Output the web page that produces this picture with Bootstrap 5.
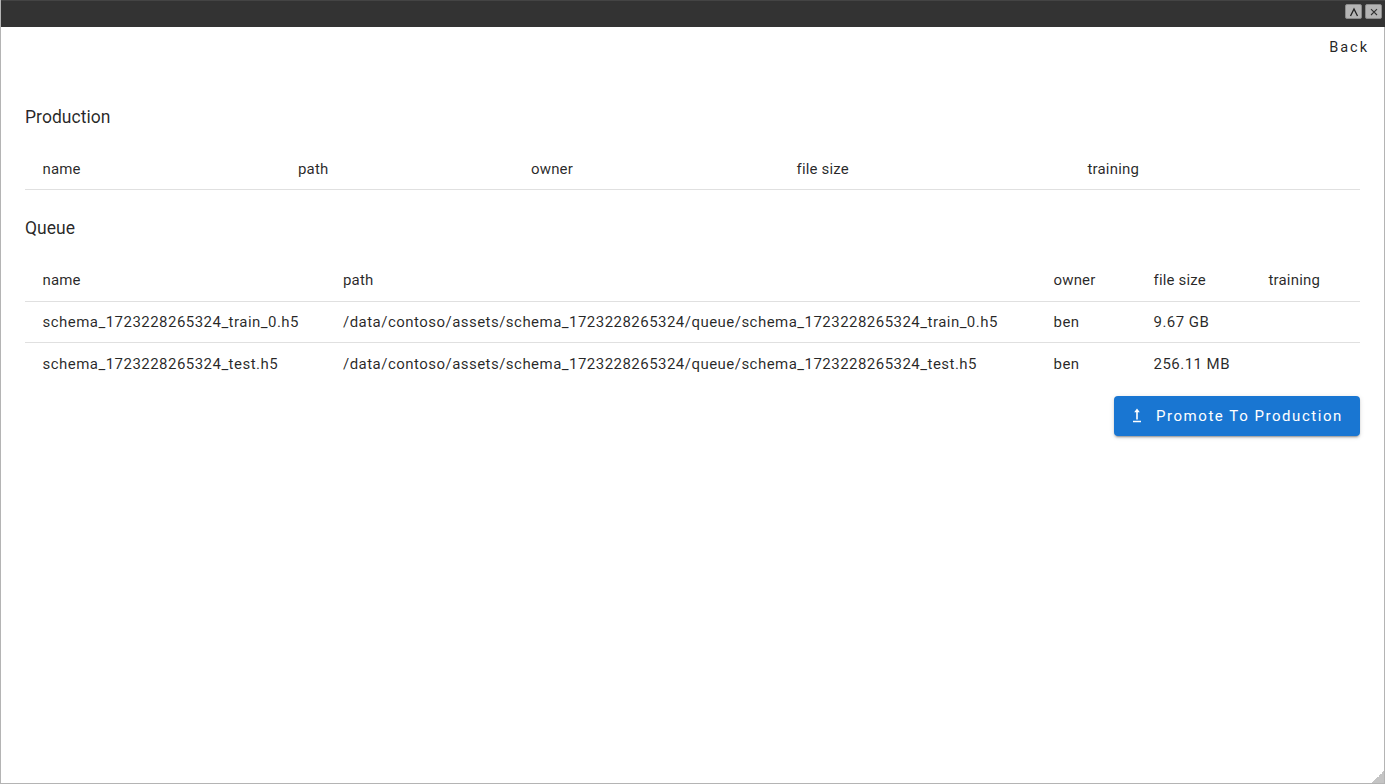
<!DOCTYPE html>
<html lang="en">
<head>
<meta charset="utf-8">
<title>Models</title>
<link href="https://cdn.jsdelivr.net/npm/bootstrap@5.3.0/dist/css/bootstrap.min.css" rel="stylesheet">
<style>
html, body { height: 100%; }
body { font-family: Roboto, "Liberation Sans", sans-serif; color: rgba(0,0,0,.87); background: #fff; overflow: hidden; }
.win-frame { height: 784px; border: 1px solid #b4b4b4; border-top: 0; position: relative; }
.win-bar { height: 27px; background: #333; border-top: 1px solid #444; margin: 0 -1px 0 0; padding: 3px 3px 0 0; gap: 3px; }
.win-btn { width: 17px; height: 15px; background: #b4b4b4; border: 1px solid #8a8a8a; border-radius: 2px; padding: 0; line-height: 0; }
.win-btn svg { display: block; margin: 1px auto 0; }
.back-btn { font-size: 14.5px; font-weight: 400; letter-spacing: 2px; line-height: 24px; color: rgba(0,0,0,.87); padding: 0; margin: 9px 15px 0 0; border: 0; background: none; }
.page-body { padding: 0 24px; }
.sec-title { font-size: 17.5px; font-weight: 400; line-height: 24px; margin: 0; letter-spacing: .05px; color: rgba(0,0,0,.85); }
.prod-title { margin-top: 45px; }
.queue-title { margin-top: 26px; }
.data-tbl { table-layout: fixed; width: 100%; margin: 19px 0 0; font-size: 15px; letter-spacing: .47px; border-collapse: collapse; }
.queue-tbl { margin-top: 20px; }
.data-tbl th, .data-tbl td { font-weight: 400; padding: 0 0 0 17.5px; vertical-align: middle; border-bottom: 1px solid #e0e0e0; color: rgba(0,0,0,.85); white-space: nowrap; background: none; }
.data-tbl th { height: 42px; letter-spacing: .17px; }
.prod-tbl th { height: 41px; padding-top: 1px; }
.data-tbl td { height: 41px; }
.data-tbl tbody tr:last-child td { border-bottom: 0; height: 42px; }
.p1 { width: 255.5px; } .p2 { width: 233px; } .p3 { width: 265.5px; } .p4 { width: 291px; }
.q1 { width: 300.5px; } .q2 { width: 710.5px; } .q3 { width: 100px; } .q4 { width: 115px; }
.promote-btn { height: 40px; width: 246px; margin-top: 11px; background: #1976d2; color: #fff; border: 0; border-radius: 4px; font-size: 15px; letter-spacing: 1.55px; box-shadow: 0 3px 1px -2px rgba(0,0,0,.2), 0 2px 2px rgba(0,0,0,.14), 0 1px 5px rgba(0,0,0,.12); padding: 0 0 0 17px; gap: 13px; }
.promote-btn:hover { background: #1976d2; color: #fff; }
.promote-label { padding-top: 2px; }
.grip { position: absolute; right: 0; bottom: 0; width: 12px; height: 12px; background: linear-gradient(135deg, transparent 50%, #c4c4c4 50%); }
</style>
</head>
<body>
<div class="win-frame">
  <div class="win-bar d-flex justify-content-end align-items-start">
    <button class="win-btn" type="button" aria-label="Collapse"><svg width="10" height="10" viewBox="0 0 10 10"><path d="M1.5 9 5 2l3.5 7" fill="none" stroke="#222" stroke-width="1.3"/></svg></button>
    <button class="win-btn" type="button" aria-label="Close"><svg width="10" height="10" viewBox="0 0 10 10"><path d="M2 2.2l6 5.8M8 2.2 2 8" fill="none" stroke="#333" stroke-width="1.1"/></svg></button>
  </div>
  <div class="d-flex justify-content-end"><button class="back-btn" type="button">Back</button></div>
  <div class="page-body">
    <h6 class="sec-title prod-title">Production</h6>
    <table class="data-tbl prod-tbl">
      <colgroup><col class="p1"><col class="p2"><col class="p3"><col class="p4"><col></colgroup>
      <thead><tr><th>name</th><th>path</th><th>owner</th><th>file size</th><th>training</th></tr></thead>
    </table>
    <h6 class="sec-title queue-title">Queue</h6>
    <table class="data-tbl queue-tbl">
      <colgroup><col class="q1"><col class="q2"><col class="q3"><col class="q4"><col></colgroup>
      <thead><tr><th>name</th><th>path</th><th>owner</th><th>file size</th><th>training</th></tr></thead>
      <tbody>
        <tr><td>schema_1723228265324_train_0.h5</td><td>/data/contoso/assets/schema_1723228265324/queue/schema_1723228265324_train_0.h5</td><td>ben</td><td>9.67 GB</td><td></td></tr>
        <tr><td>schema_1723228265324_test.h5</td><td>/data/contoso/assets/schema_1723228265324/queue/schema_1723228265324_test.h5</td><td>ben</td><td>256.11 MB</td><td></td></tr>
      </tbody>
    </table>
    <div class="d-flex justify-content-end">
      <button class="btn promote-btn d-flex align-items-center" type="button">
        <svg width="12" height="16" viewBox="0 0 12 16"><path d="M6 .5 3.2 4.2h2v7.3h1.6V4.2h2zM2 12.8h8v1.5H2z" fill="#fff"/></svg>
        <span class="promote-label">Promote To Production</span>
      </button>
    </div>
  </div>
  <div class="grip"></div>
</div>
<script src="https://cdn.jsdelivr.net/npm/bootstrap@5.3.0/dist/js/bootstrap.bundle.min.js"></script>
</body>
</html>
